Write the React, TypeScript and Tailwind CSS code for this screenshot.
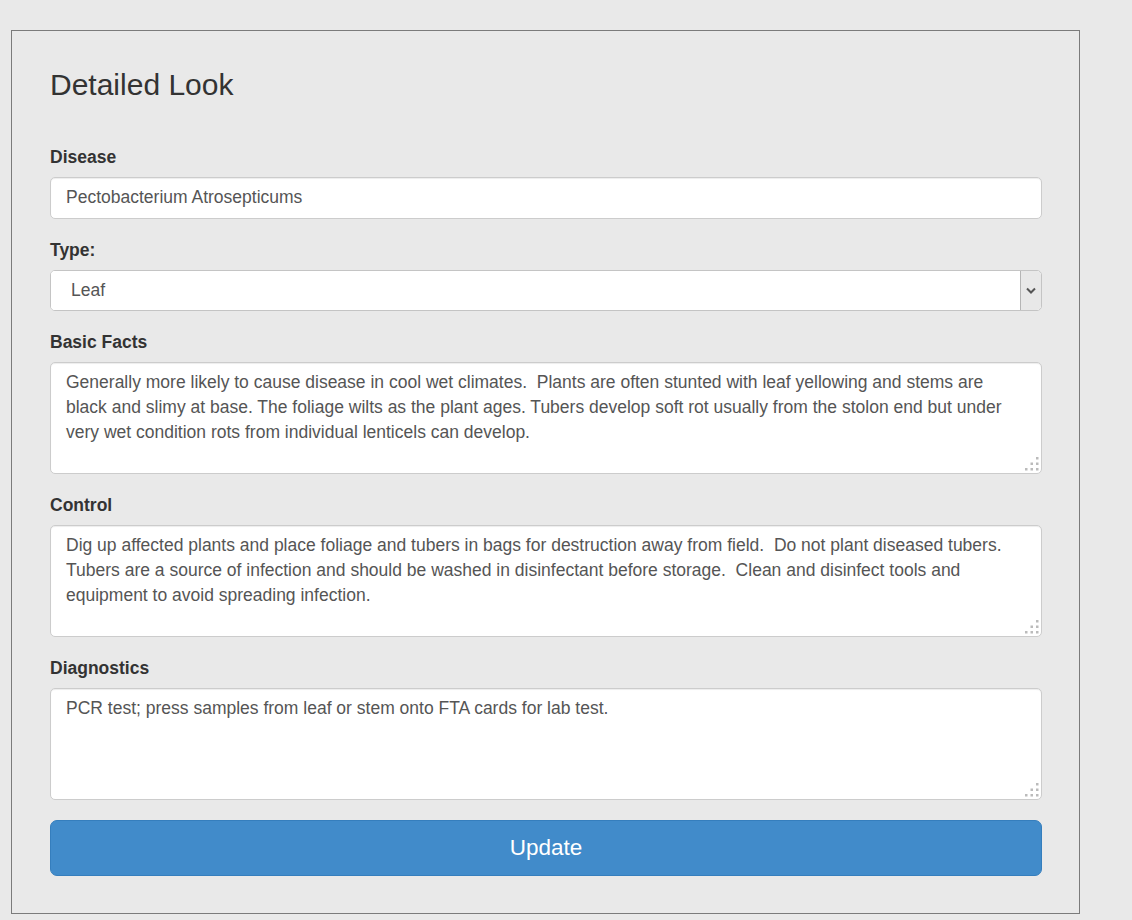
const font = { fontFamily: '"Liberation Sans", Arial, sans-serif' };

const labelCls = "block h-[25px] leading-[25px] text-[17.5px] font-bold text-[#333] mb-[6.5px]";

function ResizeGrip() {
  return (
    <svg
      className="absolute right-[2px] bottom-[2px] pointer-events-none"
      width="15"
      height="15"
      viewBox="0 0 15 15"
    >
      <g fill="#bbbbbb">
        <rect x="11" y="0" width="2.5" height="2.5" />
        <rect x="5.5" y="5.5" width="2.5" height="2.5" />
        <rect x="11" y="5.5" width="2.5" height="2.5" />
        <rect x="0" y="11" width="2.5" height="2.5" />
        <rect x="5.5" y="11" width="2.5" height="2.5" />
        <rect x="11" y="11" width="2.5" height="2.5" />
      </g>
    </svg>
  );
}

function TextBox({ value }: { value: string }) {
  return (
    <div className="relative">
      <textarea
        readOnly
        value={value}
        style={font}
        className="block w-full h-[112px] resize-none rounded-[5px] border border-[#cccccc] bg-white px-[15px] py-[7.5px] text-[17.5px] leading-[25px] text-[#555] outline-none shadow-[inset_0_1px_1px_rgba(0,0,0,0.075)]"
      />
      <ResizeGrip />
    </div>
  );
}

export default function App() {
  return (
    <div style={font} className="min-h-screen bg-[#e9e9e9] pt-[30px] pl-[11px]">
      <div className="w-[1069px] h-[884px] border border-[#7b7b7b] pl-[38px] pr-[37px] pt-[37px]">
        <h3 className="h-[33px] text-[30px] leading-[33px] font-normal text-[#333]">Detailed Look</h3>

        <form className="mt-[44px]" onSubmit={(e) => e.preventDefault()}>
          <div className="mb-[19.5px]">
            <label className={labelCls}>Disease</label>
            <input
              readOnly
              value="Pectobacterium Atrosepticums"
              style={font}
              className="block w-full h-[42px] rounded-[5px] border border-[#cccccc] bg-white px-[15px] text-[17.5px] text-[#555] outline-none shadow-[inset_0_1px_1px_rgba(0,0,0,0.075)]"
            />
          </div>

          <div className="mb-[19.5px]">
            <label className={labelCls}>Type:</label>
            <div className="flex h-[41px] rounded-[5px] border border-[#c4c4c4] bg-white overflow-hidden">
              <select
                style={font}
                className="flex-1 appearance-none bg-white pl-[20px] text-[17.5px] text-[#555] outline-none"
                defaultValue="Leaf"
              >
                <option>Leaf</option>
                <option>Stem</option>
                <option>Tuber</option>
              </select>
              <div className="w-[21px] flex items-center justify-center border-l border-[#b5b5b5] bg-[#e8e8e8] rounded-r-[4px]">
                <svg width="10" height="7" viewBox="0 0 10 7">
                  <path d="M1 1.5 L5 5.5 L9 1.5" fill="none" stroke="#555" strokeWidth="2" />
                </svg>
              </div>
            </div>
          </div>

          <div className="mb-[19.5px]">
            <label className={labelCls}>Basic Facts</label>
            <TextBox value="Generally more likely to cause disease in cool wet climates.  Plants are often stunted with leaf yellowing and stems are black and slimy at base. The foliage wilts as the plant ages. Tubers develop soft rot usually from the stolon end but under very wet condition rots from individual lenticels can develop." />
          </div>

          <div className="mb-[19.5px]">
            <label className={labelCls}>Control</label>
            <TextBox value="Dig up affected plants and place foliage and tubers in bags for destruction away from field.  Do not plant diseased tubers.  Tubers are a source of infection and should be washed in disinfectant before storage.  Clean and disinfect tools and equipment to avoid spreading infection." />
          </div>

          <div className="mb-[20px]">
            <label className={labelCls}>Diagnostics</label>
            <TextBox value="PCR test; press samples from leaf or stem onto FTA cards for lab test." />
          </div>

          <button
            type="submit"
            style={font}
            className="block w-full h-[56px] rounded-[7px] border border-[#357ebd] bg-[#418bca] text-[22.5px] text-white"
          >
            Update
          </button>
        </form>
      </div>
    </div>
  );
}
